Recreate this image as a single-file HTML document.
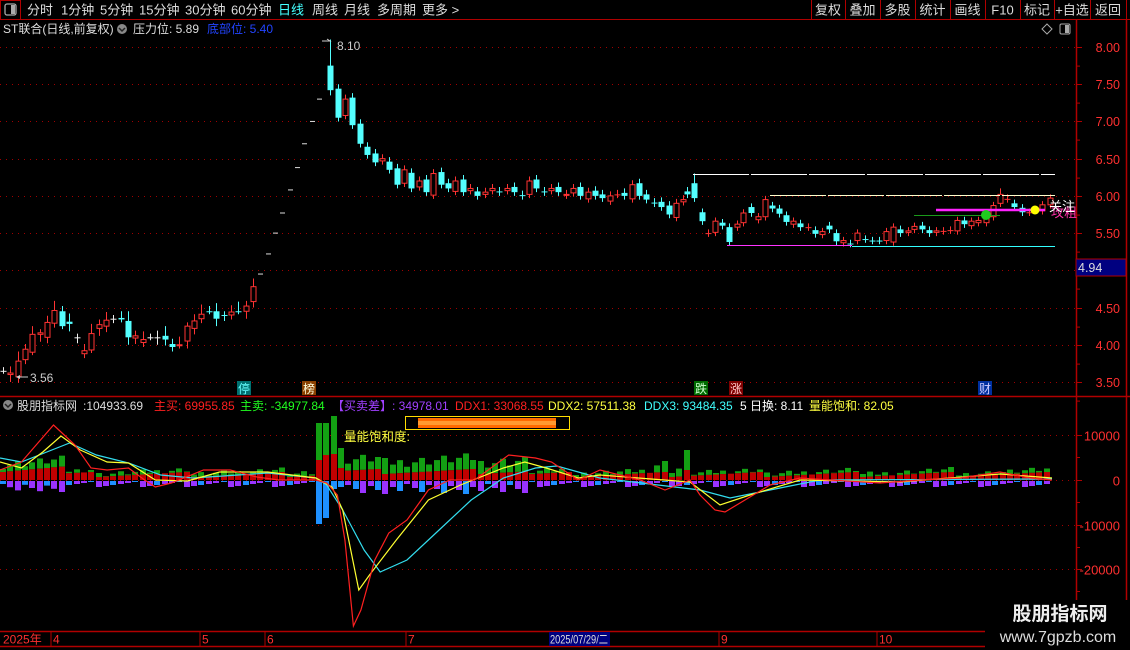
<!DOCTYPE html>
<html><head><meta charset="utf-8">
<style>
html,body{margin:0;padding:0;background:#000;width:1130px;height:650px;overflow:hidden;font-family:"Liberation Sans","Noto Sans CJK SC",sans-serif;}
svg{position:absolute;left:0;top:0}
text{font-family:"Liberation Sans","Noto Sans CJK SC",sans-serif;}
</style></head><body>
<svg id="s" width="1130" height="650" xmlns="http://www.w3.org/2000/svg"></svg>
<script>
var S=[];
function a(t){S.push(t);}
function Y(p){return 47+(8-p)*74.44;}
function IY(v){return 480-v*44.7/10000;}
a('<line x1="0" y1="19.5" x2="1130" y2="19.5" stroke="#b00000"/>');
a('<rect x="0.5" y="0.5" width="20" height="19" fill="none" stroke="#b00000"/>');
a('<rect x="5" y="4" width="11" height="11" rx="2" fill="none" stroke="#aaa" stroke-width="1.3"/><rect x="11" y="5" width="4" height="9" fill="#aaa"/>');
var tb=[["分时",27],["1分钟",61],["5分钟",100],["15分钟",139],["30分钟",185],["60分钟",231],["日线",278],["周线",312],["月线",344],["多周期",377],["更多 >",422]];
tb.forEach(function(t){a('<text x="'+t[1]+'" y="14.5" font-size="13" fill="'+(t[0]=="日线"?"#4ff":"#ddd")+'">'+t[0]+'</text>');});
var sep=[811,845,880,915,950,985,1020,1054,1090,1126];
var bl=["复权","叠加","多股","统计","画线","F10","标记","+自选","返回"];
sep.forEach(function(x){a('<line x1="'+x+'.5" y1="0" x2="'+x+'.5" y2="19" stroke="#b00000"/>');});
bl.forEach(function(t,i){a('<text x="'+((sep[i]+sep[i+1])/2)+'" y="14.5" font-size="13" fill="#ddd" text-anchor="middle">'+t+'</text>');});
a('<text x="3" y="33" font-size="12" fill="#ddd">ST联合(日线,前复权)</text>');
a('<circle cx="122" cy="29" r="5" fill="#888"/><path d="M119 28l3 3 3-3" stroke="#222" stroke-width="1.5" fill="none"/>');
a('<text x="133" y="33" font-size="12" fill="#ddd">压力位: 5.89</text>');
a('<text x="207" y="33" font-size="12" fill="#2244ff">底部位: 5.40</text>');
a('<path d="M1047 24l5 5-5 5-5-5z" fill="none" stroke="#aaa"/>');
a('<rect x="1060" y="24" width="10" height="10" rx="1.5" fill="none" stroke="#aaa"/><rect x="1065" y="25" width="4" height="8" fill="#aaa"/>');
a('<line x1="1076.5" y1="20" x2="1076.5" y2="632" stroke="#b00000" stroke-width="1.5"/>');
a('<line x1="1126.5" y1="20" x2="1126.5" y2="650" stroke="#b00000" stroke-width="1.5"/>');
a('<line x1="0" y1="396.5" x2="1130" y2="396.5" stroke="#b00000" stroke-width="1.5"/>');
for(var p=3.5;p<=8.001;p+=0.5){var y=Math.round(Y(p))+0.5;
 a('<line x1="0" y1="'+y+'" x2="1075" y2="'+y+'" stroke="#a00000" stroke-dasharray="1,5"/>');
 a('<line x1="1076" y1="'+y+'" x2="1082" y2="'+y+'" stroke="#b00000"/>');
 a('<text x="1120" y="'+(y+4.5)+'" font-size="12.5" fill="#ff3030" text-anchor="end">'+p.toFixed(2)+'</text>');
 a('<line x1="1076" y1="'+(y+18.6)+'" x2="1080" y2="'+(y+18.6)+'" stroke="#b00000"/>');}
a('<rect x="1076" y="259" width="50" height="17" fill="#000080" stroke="#b00000"/><text x="1078" y="272" font-size="12.5" fill="#ddd">4.94</text>');
[10000,0,-10000,-20000].forEach(function(v){var y=Math.round(IY(v))+0.5;
 a('<line x1="0" y1="'+y+'" x2="1075" y2="'+y+'" stroke="#a00000" stroke-dasharray="1,5"/>');
 a('<line x1="1076" y1="'+y+'" x2="1082" y2="'+y+'" stroke="#b00000"/>');
 a('<text x="1120" y="'+(y+5)+'" font-size="13" fill="#ff3030" text-anchor="end">'+(v<0?"-":"")+Math.abs(v)+'</text>');
 a('<line x1="1076" y1="'+(y+22)+'" x2="1080" y2="'+(y+22)+'" stroke="#b00000"/>');});
var C=[];
var early=[[3.65,3.65],[3.6,3.62],[3.57,3.78],[3.8,3.94],[3.9,4.14],[4.14,4.16],[4.1,4.3],[4.29,4.46],[4.45,4.25],[4.31,4.28],[4.1,4.1],[3.88,3.92],[3.93,4.15],[4.22,4.27],[4.25,4.33],[4.35,4.35],[4.36,4.34],[4.32,4.1],[4.09,4.12],[4.03,4.07],[4.1,4.1],[4.1,4.1],[4.12,4.07],[4.01,3.97],[3.99,4.0],[4.05,4.25],[4.22,4.32],[4.35,4.41],[4.45,4.45],[4.45,4.35],[4.4,4.4],[4.4,4.44],[4.45,4.45],[4.45,4.52],[4.58,4.78]];
early.forEach(function(d,i){var h=Math.max(d[0],d[1])+0.05+((i*7)%5)*0.02,l=Math.min(d[0],d[1])-0.04-((i*3)%4)*0.02;C.push([3+7.35*i,d[0],d[1],h,l]);});
var lim=[4.95,5.22,5.5,5.77,6.08,6.38,6.7,7.0,7.3];
lim.forEach(function(p,k){var x=3+7.35*(35+k);C.push([x,p,p,p,p,"lim"]);});
C.push([3+7.35*44+4,7.75,7.42,8.1,7.35]);
var mid=[7.05,7.3,6.95,6.7,6.55,6.45,6.5,6.35,6.15,6.35,6.1,6.2,6.05,6.3,6.15,6.1,6.2,6.05,6.1,6.0,6.05,6.1,6.05,6.1,6.05,6.0,6.2,6.1,6.05,6.1,6.05,6.02,6.1,6.0,6.05,6.0,5.97,6.0,6.02,6.0,6.15,6.0,5.95,5.9,5.85,5.75,5.9,5.95];
var prev=7.42;
mid.forEach(function(c,k){var i=45+k;var o=(k%3==1)?prev-0.04:prev+0.02;if(k==1)o=7.08;var h=Math.max(o,c)+0.06,l=Math.min(o,c)-0.05;C.push([3+7.35*i+4,o,c,h,l]);prev=c;});
var z=[[687,6.06,6.02,6.12],[694,6.17,5.97,6.3],[702,5.78,5.66],[708,5.5,5.5],[715,5.51,5.66],[722,5.64,5.6],[729,5.58,5.38],[737,5.58,5.62],[743,5.64,5.77],[751,5.85,5.77],[758,5.68,5.72],[765,5.72,5.95,6.0],[772,5.87,5.83],[779,5.83,5.76],[786,5.74,5.65],[793,5.62,5.66],[800,5.63,5.58],[808,5.58,5.58],[815,5.54,5.49],[822,5.48,5.52],[829,5.6,5.55],[836,5.5,5.39],[843,5.37,5.4],[850,5.36,5.36],[857,5.4,5.5],[865,5.42,5.42],[872,5.4,5.4],[879,5.4,5.4],[886,5.4,5.52],[893,5.38,5.58],[900,5.55,5.5],[908,5.51,5.53],[914,5.55,5.59],[922,5.6,5.55],[929,5.54,5.5],[936,5.51,5.53],[943,5.53,5.53],[950,5.54,5.54],[957,5.53,5.67],[964,5.67,5.62],[971,5.6,5.66],[978,5.64,5.67],[986,5.64,5.7],[993,5.72,5.87,5.92],[1000,5.9,6.02,6.1],[1007,5.96,5.96,6.02],[1014,5.9,5.85],[1022,5.84,5.78],[1029,5.78,5.78],[1042,5.8,5.88],[1050,5.88,5.97,6.02]];
z.forEach(function(d){var h=d[3]||Math.max(d[1],d[2])+0.05,l=Math.min(d[1],d[2])-0.05;C.push([d[0],d[1],d[2],h,l]);});
C.forEach(function(d){var x=Math.round(d[0])+0.5,o=d[1],c=d[2];
 if(d[5]=="lim"){a('<line x1="'+(x-2.5)+'" y1="'+Y(o)+'" x2="'+(x+2.5)+'" y2="'+Y(o)+'" stroke="#ddd"/>');return;}
 var up=c>o,dj=Math.abs(c-o)<0.005,col=up?"#ff3333":"#54ffff";if(dj)col=(x<160)?"#eee":(c>5.45?"#ff3333":"#54ffff");
 a('<line x1="'+x+'" y1="'+Y(d[3])+'" x2="'+x+'" y2="'+Y(d[4])+'" stroke="'+col+'"/>');
 var t=Y(Math.max(o,c)),b=Y(Math.min(o,c));if(b-t<1)b=t+1;
 if(up)a('<rect x="'+(x-2.5)+'" y="'+t+'" width="5" height="'+(b-t)+'" fill="#000" stroke="'+col+'"/>');
 else a('<rect x="'+(x-3)+'" y="'+t+'" width="6" height="'+(b-t)+'" fill="'+col+'"/>');});
a('<line x1="17" y1="377" x2="28" y2="377" stroke="#ccc"/><path d="M16 377l4-2v4z" fill="#ccc"/><text x="30" y="382" font-size="12" fill="#ccc">3.56</text>');
a('<path d="M322 41h8l-3 -2" fill="none" stroke="#ccc"/><text x="337" y="50" font-size="12" fill="#ccc">8.10</text>');
a('<line x1="693" y1="174.5" x2="1055" y2="174.5" stroke="#fff" stroke-dasharray="56,2"/>');
a('<line x1="770" y1="195.5" x2="1055" y2="195.5" stroke="#ffffcc" stroke-dasharray="56,2"/>');
a('<line x1="727" y1="245.5" x2="852" y2="245.5" stroke="#ff33ff"/>');
a('<line x1="852" y1="246.5" x2="1055" y2="246.5" stroke="#33ffff"/>');
a('<line x1="914" y1="215.5" x2="1000" y2="215.5" stroke="#1a9a1a"/>');
a('<line x1="936" y1="210" x2="1045" y2="210" stroke="#ff22ff" stroke-width="2.5"/>');
a('<circle cx="986" cy="215" r="5" fill="#1ecc1e"/><circle cx="1035" cy="210" r="4.5" fill="#ffff00"/>');
a('<text x="1051" y="217" font-size="13" fill="#ff33aa">攻粗</text><text x="1049" y="211" font-size="13" fill="#fff">关注</text>');
[["停",237,"#007070","#6ff"],["榜",302,"#8a4000","#ffd"],["跌",694,"#006b00","#cfc"],["涨",729,"#800000","#fcc"],["财",978,"#0030a0","#ccf"]].forEach(function(l){
 a('<rect x="'+l[1]+'" y="381" width="14" height="14" fill="'+l[2]+'"/><text x="'+(l[1]+7)+'" y="393" font-size="12" text-anchor="middle" fill="'+l[3]+'">'+l[0]+'</text>');});
a('<circle cx="8" cy="405" r="5" fill="#888"/><path d="M5 404l3 3 3-3" stroke="#222" stroke-width="1.5" fill="none"/>');
[["股朋指标网",17,"#ddd"],[":104933.69",83,"#ddd"],["主买: 69955.85",154,"#ff2020"],["主卖: -34977.84",240,"#20ff20"],["【买卖差】: 34978.01",332,"#a040ff"],["DDX1: 33068.55",455,"#ff2020"],["DDX2: 57511.38",548,"#ffff40"],["DDX3: 93484.35",644,"#40ffff"],["5 日换: 8.11",740,"#fff"],["量能饱和: 82.05",809,"#ffff40"]].forEach(function(t){
 a('<text x="'+t[1]+'" y="410" font-size="12" fill="'+t[2]+'">'+t[0]+'</text>');});
for(var i=0;i<143;i++){var x=Math.round(3+7.35*i);var r=((i*37)%11)/10,r2=((i*53)%13)/12;
 var g=r*5,rd=3+r2*5,dn=1+((i*29)%6);
 if(i<9){g=3+r*8;rd=8+r2*8;dn=3+r*8;}
 if(i>=47&&i<72){g=6+r*10;rd=6+r2*5;dn=3+r*10;}
 if(i>88&&i<93){g=3+r*10;}
 var dc=((i*7)%3==0)?"#1e90ff":"#9933ff";
 if(i>=43&&i<=46){var G=[[37,20,43],[32,25,37],[38,26,8],[20,12,6]][i-43];g=G[0];rd=G[1];dn=G[2];dc="#1e90ff";}
 if(i==93){g=20;rd=10;}
 a('<rect x="'+(x-3)+'" y="'+(480-rd-g)+'" width="6" height="'+g+'" fill="#13a013"/>');
 a('<rect x="'+(x-3)+'" y="'+(480-rd)+'" width="6" height="'+rd+'" fill="#c00000"/>');
 a('<rect x="'+(x-3)+'" y="481" width="6" height="'+dn+'" fill="'+dc+'"/>');}
function fx(x){return x<=560?x*1.071:x;}
function pl(p,c){a('<polyline fill="none" stroke="'+c+'" stroke-width="1.2" points="'+p.map(function(q){return fx(q[0]).toFixed(1)+","+q[1]}).join(" ")+'"/>');}
pl([[0,458],[20,462],[65,443],[90,455],[120,463],[150,475],[180,478],[250,473],[295,478],[305,485],[320,510],[340,550],[355,572],[380,560],[410,530],[440,500],[470,478],[500,468],[520,466],[560,478],[700,490],[730,498],[770,490],[820,480],[1052,479]],"#33ddee");
pl([[0,462],[20,468],[40,452],[57,436],[75,450],[100,462],[120,463],[145,480],[175,481],[205,472],[250,472],[295,478],[310,487],[320,510],[335,590],[345,575],[370,540],[400,500],[430,485],[470,468],[490,462],[510,468],[540,478],[600,475],[690,482],[720,505],[750,495],[800,480],[900,482],[1000,474],[1052,478]],"#ffff30");
pl([[0,470],[20,462],[50,425],[70,445],[85,468],[100,470],[120,468],[135,480],[145,487],[160,483],[190,470],[215,470],[240,477],[260,480],[295,480],[305,483],[315,495],[322,540],[330,626],[337,610],[350,560],[363,533],[380,520],[400,490],[420,480],[443,480],[475,455],[500,458],[515,462],[540,480],[600,470],[640,480],[665,490],[690,480],[700,495],[715,510],[725,512],[745,500],[770,485],[800,478],[830,480],[880,483],[920,480],[960,478],[1000,472],[1030,478],[1052,480]],"#ff2020");
a('<text x="344" y="441" font-size="12.5" fill="#ffff40">量能饱和度:</text>');
a('<rect x="405.5" y="416.5" width="164" height="13" fill="#000" stroke="#ffdd00"/>');
a('<rect x="418" y="418" width="138" height="10" fill="#ff6a00"/><rect x="418" y="421" width="138" height="4" fill="#ff9a30"/>');
a('<line x1="0" y1="631.5" x2="1130" y2="631.5" stroke="#b00000" stroke-width="1.5"/><line x1="0" y1="646.5" x2="1130" y2="646.5" stroke="#b00000" stroke-width="1.5"/>');
a('<rect x="549" y="632" width="61" height="14" fill="#000080"/>');
[["2025年",3],["4",53],["5",202],["6",267],["7",408],["2025/07/29/二",550],["9",721],["10",879]].forEach(function(d){
 a('<text x="'+d[1]+'" y="643.5" font-size="12" fill="'+(d[1]==550?"#ddd":"#ff3030")+'"'+(d[1]==550?' textLength="58" lengthAdjust="spacingAndGlyphs"':'')+'>'+d[0]+'</text>');
 if(d[1]>10&&d[1]!=550)a('<line x1="'+(d[1]-2)+'" y1="632" x2="'+(d[1]-2)+'" y2="646" stroke="#b00000"/>');});
a('<rect x="985" y="600" width="145" height="50" fill="#000"/>');
a('<text x="1060" y="620" font-size="19" font-weight="bold" fill="#eee" text-anchor="middle">股朋指标网</text>');
a('<text x="1058" y="642" font-size="16" fill="#ddd" text-anchor="middle">www.7gpzb.com</text>');
document.getElementById("s").innerHTML=S.join("");
</script>
</body></html>
